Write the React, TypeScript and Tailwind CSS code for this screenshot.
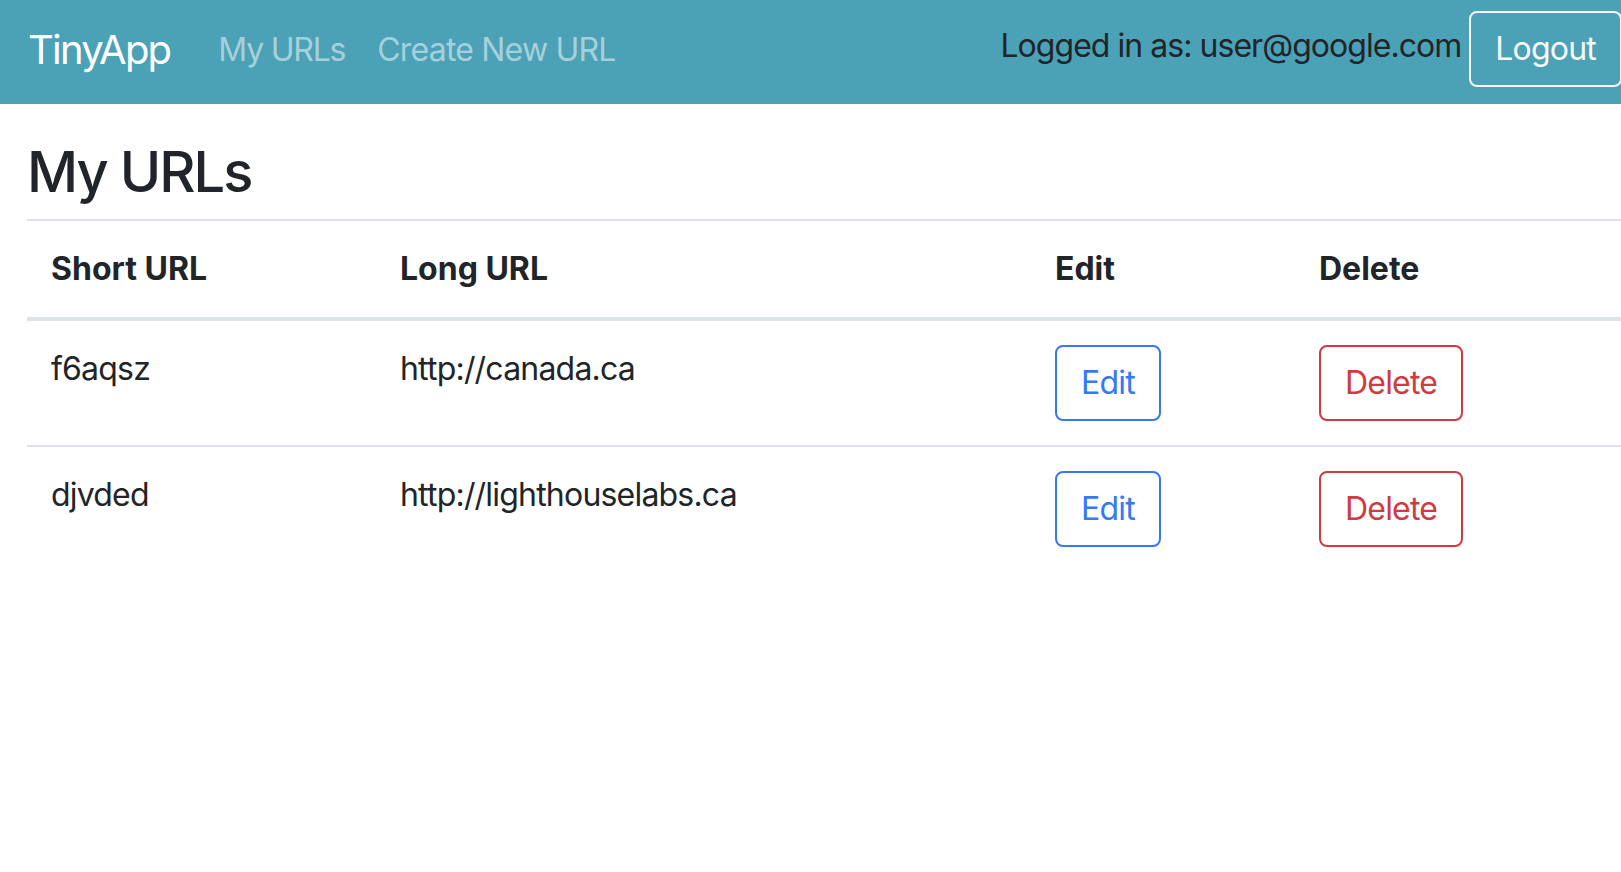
import React from "react";

type UrlRow = {
  short: string;
  long: string;
};

const urls: UrlRow[] = [
  { short: "f6aqsz", long: "http://canada.ca" },
  { short: "djvded", long: "http://lighthouselabs.ca" },
];

const font = { fontFamily: "Inter, 'Noto Sans', 'Liberation Sans', sans-serif" };

const Navbar = () => {
  return (
    <nav className="flex items-start h-[104px] w-[1622px] bg-[#4ba1b6] pl-[28px]">
      <a className="mt-[20px] text-[40px] leading-[60px] tracking-[-0.045em] text-white mr-[32px]">TinyApp</a>
      <div className="flex">
        <a className="mt-[26px] px-4 text-[32px] leading-[48px] tracking-[-0.038em] text-[#a6d0db]">My URLs</a>
        <a className="mt-[26px] px-4 text-[32px] leading-[48px] tracking-[-0.025em] text-[#a6d0db]">Create New URL</a>
      </div>
      <div className="ml-auto flex items-start">
        <span className="mt-[22px] text-[32px] leading-[48px] tracking-[-0.03em] text-[#212529]">
          Logged in as: user@google.com
        </span>
        <button className="ml-[8px] mt-[11px] border-2 border-[#f8f9fa] rounded-[8px] px-[24px] py-[12px] text-[32px] leading-[48px] tracking-[-0.025em] text-[#f8f9fa]">
          Logout
        </button>
      </div>
    </nav>
  );
};

const App = () => {
  return (
    <div className="w-[1621px] min-h-[872px] overflow-hidden bg-white text-[#212529]" style={font}>
      <Navbar />

      <main className="pl-[27px]">
        <h3 className="mt-[35px] mb-[13px] text-[56px] leading-[1.2] font-medium tracking-[-0.035em]">My URLs</h3>

        <table className="table-fixed w-[1600px] border-collapse text-[32px] leading-[48px] tracking-[-0.025em]">
          <thead>
            <tr>
              <th className="w-[349px] text-left font-bold tracking-normal px-[24px] py-[24px] border-t-2 border-b-4 border-[#dee2e6]">
                Short URL
              </th>
              <th className="w-[655px] text-left font-bold tracking-normal px-[24px] py-[24px] border-t-2 border-b-4 border-[#dee2e6]">
                Long URL
              </th>
              <th className="w-[264px] text-left font-bold tracking-normal px-[24px] py-[24px] border-t-2 border-b-4 border-[#dee2e6]">
                Edit
              </th>
              <th className="text-left font-bold tracking-normal px-[24px] py-[24px] border-t-2 border-b-4 border-[#dee2e6]">
                Delete
              </th>
            </tr>
          </thead>
          <tbody>
            {urls.map((url, i) => (
              <tr key={url.short}>
                <td className={`align-top px-[24px] py-[24px] ${i > 0 ? "border-t-2 border-[#dee2e6]" : ""}`}>
                  {url.short}
                </td>
                <td className={`align-top px-[24px] py-[24px] ${i > 0 ? "border-t-2 border-[#dee2e6]" : ""}`}>
                  {url.long}
                </td>
                <td className={`align-top px-[24px] py-[24px] ${i > 0 ? "border-t-2 border-[#dee2e6]" : ""}`}>
                  <button className="border-2 border-[#3579f6] rounded-[8px] px-[24px] py-[12px] text-[32px] leading-[48px] text-[#3579f6]">
                    Edit
                  </button>
                </td>
                <td className={`align-top px-[24px] py-[24px] ${i > 0 ? "border-t-2 border-[#dee2e6]" : ""}`}>
                  <button className="border-2 border-[#d03a41] rounded-[8px] px-[24px] py-[12px] text-[32px] leading-[48px] text-[#d03a41]">
                    Delete
                  </button>
                </td>
              </tr>
            ))}
          </tbody>
        </table>
      </main>
    </div>
  );
};

export default App;
